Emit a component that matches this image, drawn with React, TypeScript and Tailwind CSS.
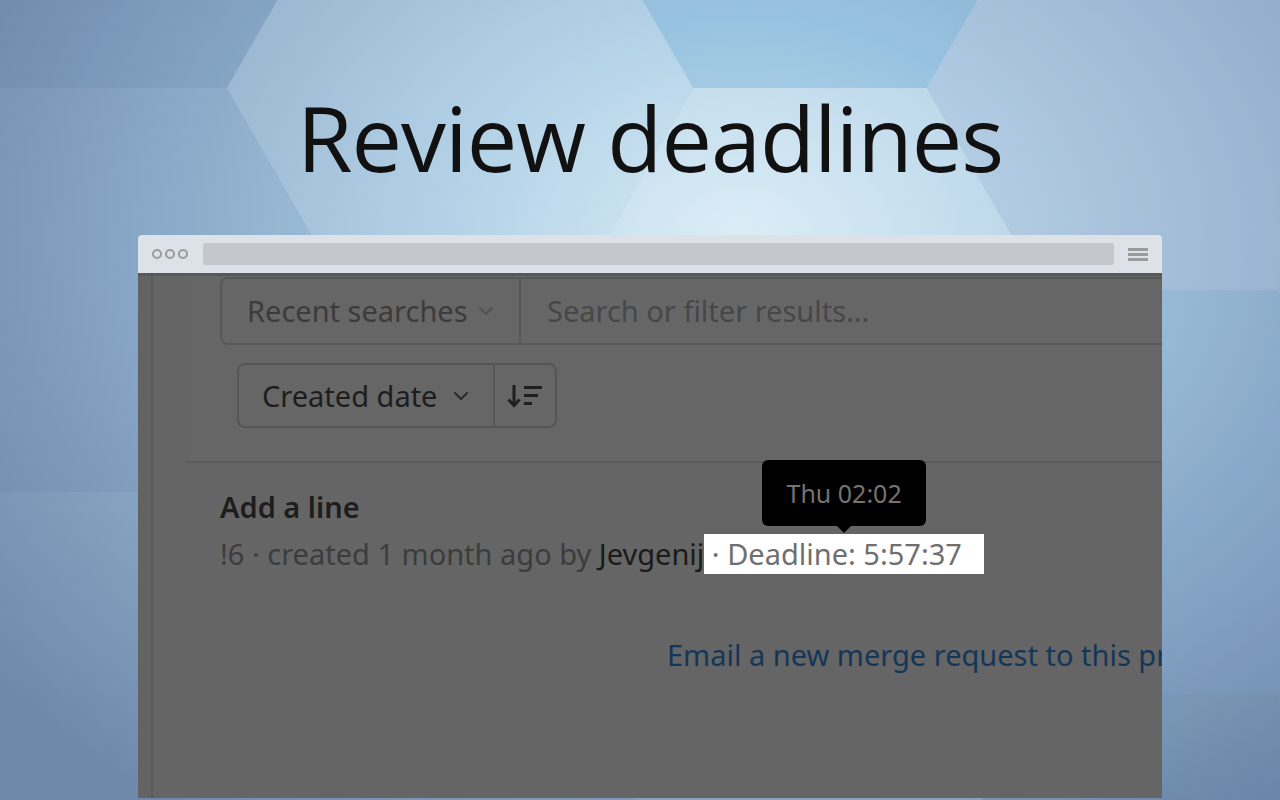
import React from "react";

// flat-top hexagon tiling behind the heading
const R = 233;
const H = 202;

const HEXES = [
  { cx: 110, cy: -114, fill: "#1b3558", o: 0.08 },
  { cx: 110, cy: 290, fill: "#1b3558", o: 0.02 },
  { cx: 110, cy: 694, fill: "#ffffff", o: 0.03 },
  { cx: 460, cy: 88, fill: "#ffffff", o: 0.12 },
  { cx: 460, cy: 492, fill: "#ffffff", o: 0.06 },
  { cx: 460, cy: 896, fill: "#ffffff", o: 0.02 },
  { cx: 810, cy: -114, fill: "#4f9ccc", o: 0.18 },
  { cx: 810, cy: 290, fill: "#ffffff", o: 0.22 },
  { cx: 810, cy: 694, fill: "#ffffff", o: 0.08 },
  { cx: 1160, cy: 88, fill: "#c4c0da", o: 0.22 },
  { cx: 1160, cy: 492, fill: "#5f8fbf", o: 0.06 },
  { cx: 1160, cy: 896, fill: "#1b3558", o: 0.04 },
];

function hexPoints(cx: number, cy: number) {
  return [
    [cx - R, cy],
    [cx - R / 2, cy - H],
    [cx + R / 2, cy - H],
    [cx + R, cy],
    [cx + R / 2, cy + H],
    [cx - R / 2, cy + H],
  ]
    .map((p) => p.join(","))
    .join(" ");
}

function Chevron({ color }: { color: string }) {
  return (
    <svg width="16" height="10" viewBox="0 0 16 10" fill="none">
      <path d="M2 2 L8 8 L14 2" stroke={color} strokeWidth="2" strokeLinecap="round" strokeLinejoin="round" />
    </svg>
  );
}

function SortIcon() {
  return (
    <svg width="36" height="24" viewBox="0 0 36 24" fill="none" stroke="#1f1f1f" strokeWidth="3">
      <path d="M7 1 V21" />
      <path d="M1.5 15.5 L7 21.5 L12.5 15.5" strokeLinejoin="miter" />
      <path d="M17 3.5 H35" />
      <path d="M17 11.5 H31" />
      <path d="M17 19.5 H25" />
    </svg>
  );
}

export default function App() {
  return (
    <div className="relative h-[800px] w-[1280px] overflow-hidden bg-[radial-gradient(ellipse_at_58%_30%,#d2e9f5_0%,#a9cce4_28%,#8aa9c8_58%,#6b86a8_90%)]">
      <svg className="absolute inset-0" width="1280" height="800" viewBox="0 0 1280 800">
        {HEXES.map((h) => (
          <polygon key={`${h.cx}-${h.cy}`} points={hexPoints(h.cx, h.cy)} fill={h.fill} fillOpacity={h.o} />
        ))}
      </svg>

      <div className="relative flex flex-col items-center pl-[20px] pt-[93px]">
        <h1 className="h-[88px] text-[90px] leading-[88px] tracking-[-1px] text-[#111111] font-['Open_Sans',sans-serif]">
          Review deadlines
        </h1>

        {/* browser window */}
        <div className="mt-[54px] flex h-[563px] w-[1024px] flex-col overflow-hidden rounded-t-[4px] font-['Noto_Sans',sans-serif]">
          <div className="flex h-[38px] shrink-0 items-center bg-[#dce2e8] pl-[14px] pr-[14px]">
            <div className="flex gap-[3px]">
              <span className="h-[10px] w-[10px] rounded-full border-2 border-[#9b9b9b]" />
              <span className="h-[10px] w-[10px] rounded-full border-2 border-[#9b9b9b]" />
              <span className="h-[10px] w-[10px] rounded-full border-2 border-[#9b9b9b]" />
            </div>
            <div className="ml-[15px] h-[22px] flex-1 rounded-[2px] bg-[#c4c8cd]" />
            <div className="ml-[14px] flex w-[20px] flex-col gap-[2px]">
              <span className="h-[3px] bg-[#9b9b9b]" />
              <span className="h-[3px] bg-[#9b9b9b]" />
              <span className="h-[3px] bg-[#9b9b9b]" />
            </div>
          </div>

          <div className="flex min-h-0 flex-1 border-t-[3px] border-[#585858] bg-[#656565]">
            <div className="w-[15px] shrink-0 border-r-2 border-[#5a5a5a] bg-[#636363]" />
            <div className="min-w-0 flex-1 overflow-hidden pl-[33px]">
              <div className="border-b-2 border-[#5b5b5b] bg-[#666666] pb-[33px] pl-[34px] pt-px">
                <div className="flex h-[68px] rounded-l-[8px] border-2 border-r-0 border-[#585858] text-[29px]">
                  <div className="flex w-[299px] shrink-0 items-center gap-[10px] border-r-2 border-[#585858] pl-[25px]">
                    <span className="text-[#3b3b3b]">Recent searches</span>
                    <Chevron color="#525252" />
                  </div>
                  <div className="flex flex-1 items-center whitespace-nowrap pl-[26px] text-[#474747]">
                    Search or filter results...
                  </div>
                </div>

                <div className="ml-[17px] mt-[18px] flex h-[65px] w-[320px] rounded-[8px] border-2 border-[#555555] text-[29px]">
                  <div className="flex w-[256px] shrink-0 items-center gap-[16px] border-r-2 border-[#555555] pl-[23px]">
                    <span className="text-[#1d1d1d]">Created date</span>
                    <Chevron color="#2a2a2a" />
                  </div>
                  <div className="flex flex-1 items-center justify-center">
                    <SortIcon />
                  </div>
                </div>
              </div>

              <div className="pl-[34px] pt-[24px] text-[29px]">
                <div className="font-semibold leading-[40px] text-[#1d1d1d]">Add a line</div>
                <div className="mt-[7px] whitespace-nowrap leading-[40px] text-[#3c3c3c]">
                  !6 · created 1 month ago by <span className="text-[#1a1a1a]">Jevgenij</span>
                  <span className="relative inline-block bg-white pr-[22px] text-[#6f6f6f]">
                    <span className="absolute bottom-[48px] left-1/2 flex h-[66px] w-[164px] -translate-x-1/2 items-center justify-center rounded-[6px] bg-black text-[25px] text-[#737373]">
                      Thu 02:02
                      <span className="absolute -bottom-[7px] left-1/2 h-0 w-0 -translate-x-1/2 border-l-[8px] border-r-[8px] border-t-[8px] border-l-transparent border-r-transparent border-t-black" />
                    </span>
                    &nbsp;· Deadline: 5:57:37
                  </span>
                </div>
              </div>

              <div className="mt-[61px] whitespace-nowrap pl-[481px] text-[29px] leading-[40px] text-[#143658]">
                Email a new merge request to this project
              </div>
            </div>
          </div>
        </div>
      </div>
    </div>
  );
}
